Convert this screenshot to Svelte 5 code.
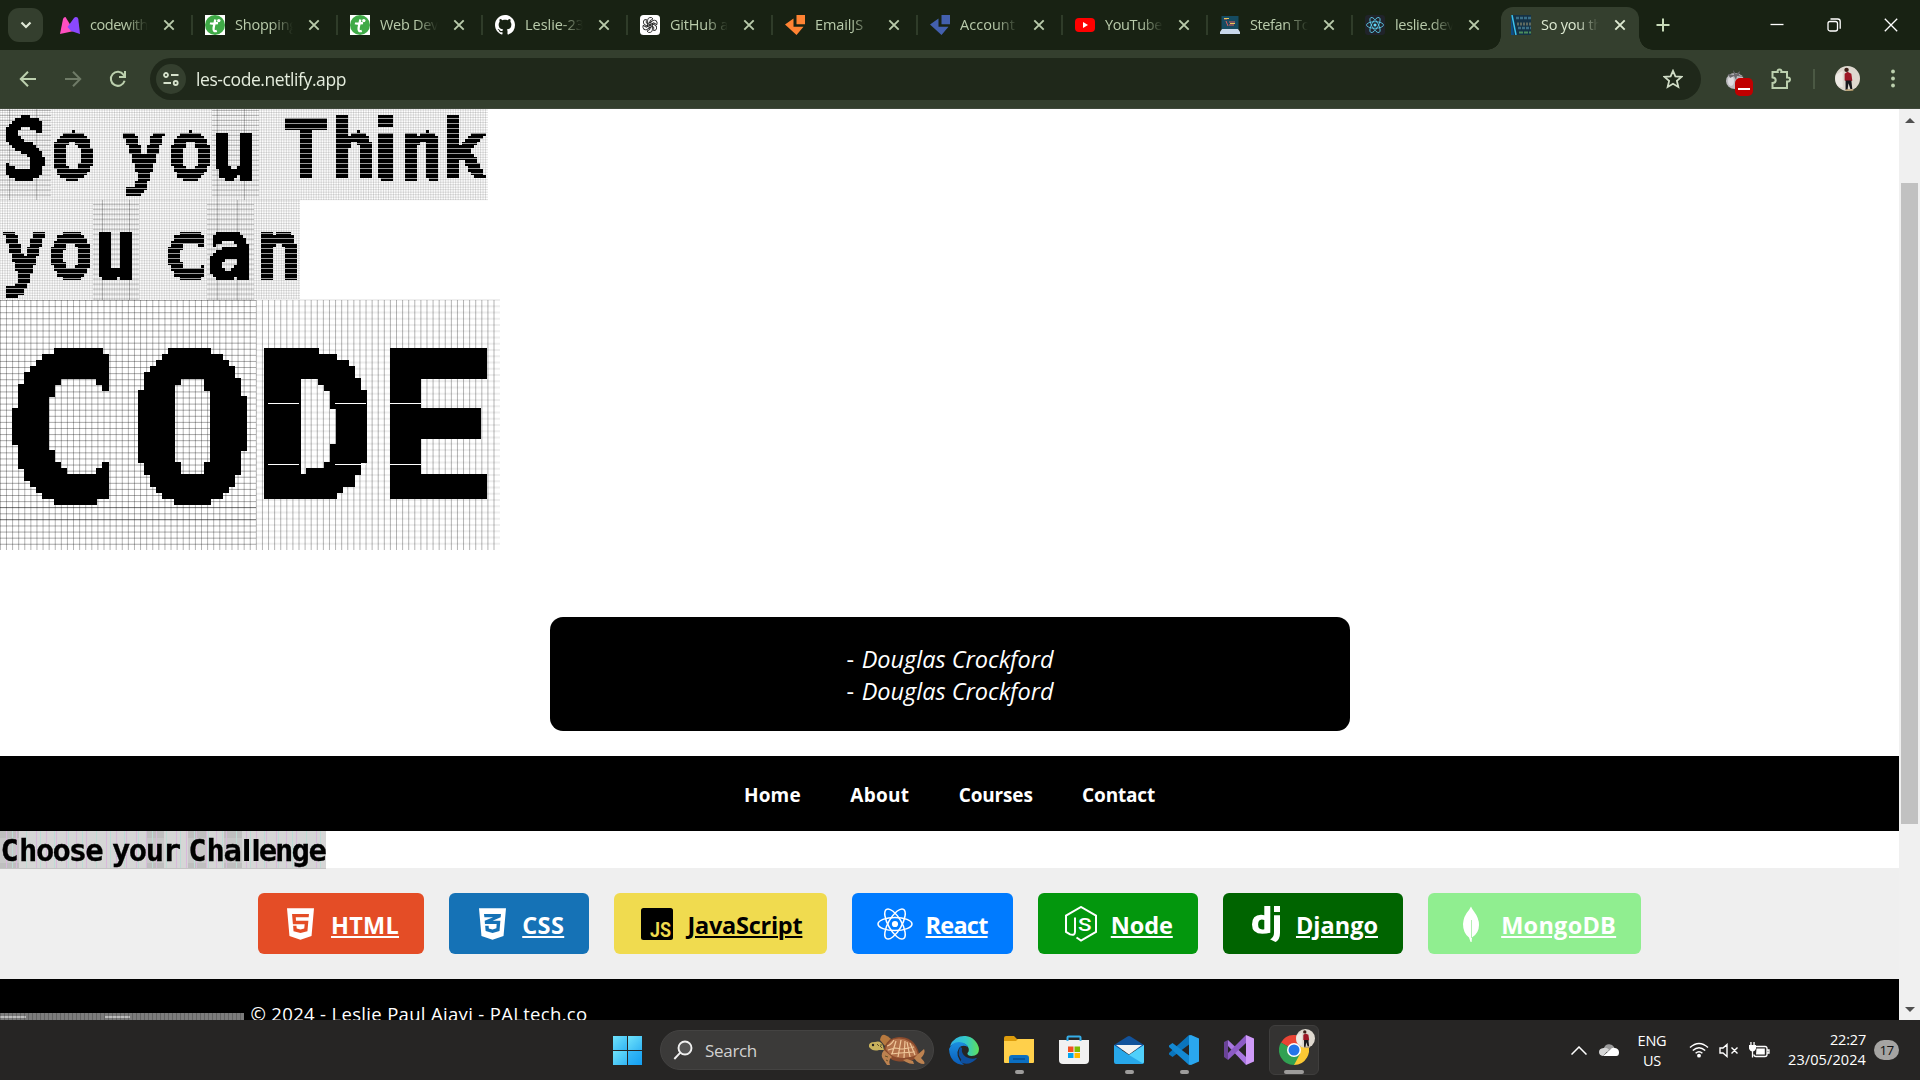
<script>
  // Adjusts letter spacing so that a label fills its measured width.
  function fit(node, width) {
    const n = node.textContent.trim().length;
    const apply = () => {
      node.style.letterSpacing = '0px';
      const natural = node.getBoundingClientRect().width;
      node.style.letterSpacing = (width - natural) / n + 'px';
    };
    apply();
    document.fonts?.ready.then(apply);
  }

  const tabs = [
    { icon: 'mimo', title: 'codewith', w: 58 },
    { icon: 'fcc', title: 'Shopping', w: 62 },
    { icon: 'fcc', title: 'Web Dev', w: 58 },
    { icon: 'github', title: 'Leslie-23', w: 59 },
    { icon: 'gpt', title: 'GitHub a', w: 58 },
    { icon: 'emailjs', title: 'EmailJS', w: 48 },
    { icon: 'account', title: 'Account', w: 55 },
    { icon: 'youtube', title: 'YouTube', w: 57 },
    { icon: 'laptop', title: 'Stefan To', w: 60 },
    { icon: 'react', title: 'leslie.dev', w: 59 }
  ];

  const links = [
    { text: 'Home', w: 57 },
    { text: 'About', w: 59 },
    { text: 'Courses', w: 74 },
    { text: 'Contact', w: 73 }
  ];

  const courses = [
    { id: 'html', text: 'HTML', w: 68 },
    { id: 'css', text: 'CSS', w: 42 },
    { id: 'js', text: 'JavaScript', w: 115 },
    { id: 'react', text: 'React', w: 62 },
    { id: 'node', text: 'Node', w: 62 },
    { id: 'django', text: 'Django', w: 82 },
    { id: 'mongo', text: 'MongoDB', w: 115 }
  ];

  // Evenly spaced hairlines used as the texture behind the display type.
  const vlines = (x0, x1, y0, y1, step, off = 0) => {
    let d = '';
    for (let x = Math.ceil((x0 - off) / step) * step + off; x < x1; x += step) d += `M${x.toFixed(2)} ${y0}V${y1}`;
    return d;
  };
  const hlines = (x0, x1, y0, y1, step, off = 0) => {
    let d = '';
    for (let y = y0 + off; y < y1; y += step) d += `M${x0} ${y.toFixed(2)}H${x1}`;
    return d;
  };
  const sc = (list, k) => list.map((v) => (v / k).toFixed(1)).join(' ');
  const line1 = sc([25.2, 73, 100, 144, 190.3, 234.3, 270, 306, 353.7, 386.7, 422, 465], 0.9);
  const line2 = sc([24.3, 71, 115, 150, 185.7, 229.7, 278.7], 0.9);
  const choose = '9.6 28.3 45.2 61.6 78 94.5 108 121.3 138 155 172 184 197.5 215.8 232.7 246.5 256 268 284.3 300.8 317.6';
</script>

{#snippet cross()}
  <svg class="cross" width="12" height="12" viewBox="0 0 12 12"><path d="M1.3 1.3l9.4 9.4M10.7 1.3l-9.4 9.4" /></svg>
{/snippet}

{#snippet atom(color, size)}
  <svg width={size} height={size} viewBox="0 0 36 36" fill="none" stroke={color} stroke-width="1.5">
    <ellipse cx="18" cy="18" rx="17" ry="6.6" />
    <ellipse cx="18" cy="18" rx="17" ry="6.6" transform="rotate(60 18 18)" />
    <ellipse cx="18" cy="18" rx="17" ry="6.6" transform="rotate(120 18 18)" />
    <circle cx="18" cy="18" r="3.1" fill={color} stroke="none" />
  </svg>
{/snippet}

{#snippet portrait(size)}
  <svg width={size} height={size} viewBox="0 0 26 26">
    <circle cx="13" cy="13" r="13" fill="#ded8cf" />
    <path d="M1 9a13 13 0 0 0 2 12l5 1V5z" fill="#eeeae4" />
    <path d="M10 8l3-2 4 2 1 7-3 2-5-2z" fill="#9c1725" />
    <circle cx="12" cy="4" r="2.3" fill="#3d2018" />
    <path d="M11 15h6l1 9h-2l-2-6-1 7h-2z" fill="#18171c" />
    <path d="M11 25h8" stroke="#b69b68" stroke-width="1.5" />
  </svg>
{/snippet}

{#snippet favicon(name)}
  {#if name === 'mimo'}
    <svg width="20" height="20" viewBox="0 0 20 20"><path d="M5.5 2L14 16 0 19 3 4q.6-2 2.500-2z" fill="#ff4fc0" /><path d="M16 2q2 0 2.300 2L20 19l-9-3-3.500-4L14 3q.8-1 2-1z" fill="#8a48ff" /></svg>
  {:else if name === 'fcc'}
    <svg width="20" height="20" viewBox="0 0 20 20"><path fill="#fff" d="M0 0h20v20H0z" /><circle cx="10" cy="10" r="10" fill="#3faa47" /><path d="M10.300 4.500L8.600 13q-.5 4.200 3.200 2.800M5 8.300q2 .8 5 0l3-.3" stroke="#fff" stroke-width="2.300" fill="none" /><circle cx="13.800" cy="5.600" r="1.700" fill="#fff" /></svg>
  {:else if name === 'github'}
    <svg width="20" height="20" viewBox="0 0 16 16"><path fill="#fff" d="M8 0C3.58 0 0 3.58 0 8c0 3.54 2.29 6.53 5.47 7.59.4.07.55-.17.55-.38 0-.19-.01-.82-.01-1.49-2.01.37-2.53-.49-2.69-.94-.09-.23-.48-.94-.82-1.13-.28-.15-.68-.52-.01-.53.63-.01 1.08.58 1.23.82.72 1.21 1.87.87 2.33.66.07-.52.28-.87.51-1.07-1.78-.2-3.64-.89-3.64-3.95 0-.87.31-1.59.82-2.15-.08-.2-.36-1.02.08-2.12 0 0 .67-.21 2.2.82.64-.18 1.32-.27 2-.27s1.36.09 2 .27c1.53-1.04 2.2-.82 2.2-.82.44 1.1.16 1.92.08 2.12.51.56.82 1.27.82 2.15 0 3.07-1.87 3.75-3.65 3.95.29.25.54.73.54 1.48 0 1.07-.01 1.93-.01 2.2 0 .21.15.46.55.38A8.01 8.01 0 0 0 16 8c0-4.42-3.58-8-8-8z" /></svg>
  {:else if name === 'gpt'}
    <svg width="20" height="20" viewBox="0 0 20 20"><rect width="20" height="20" rx="3.5" fill="#fff" /><g fill="none" stroke="#222" stroke-width=".9">{#each [0, 60, 120, 180, 240, 300] as a}<path d="M10 7.300L7.600 8.700V5.200a2.900 2.900 0 0 1 5.400-1.300l-3 1.800v4.200" transform="rotate({a} 10 10)" />{/each}</g></svg>
  {:else if name === 'emailjs' || name === 'account'}
    <svg width="20" height="20" viewBox="0 0 20 20" fill={name === 'emailjs' ? '#ff8333' : '#4360ae'}><path d="M11.500 0H20v9.200h-8.500zM8.500 3.500v8.200H18.500L11.500 20 0 9.500z" /></svg>
  {:else if name === 'youtube'}
    <svg width="20" height="20" viewBox="0 0 20 20"><rect y="3" width="20" height="14" rx="4" fill="#f00" /><path d="M8 7v6l5-3z" fill="#fff" /></svg>
  {:else if name === 'laptop'}
    <svg width="20" height="20" viewBox="0 0 20 20"><path d="M1.500 1h17v13h-17z" fill="#154b61" /><path d="M4 4h3M6 6l2 5M9 7h6M9 10h5" stroke="#e05c5c" /><path d="M4 3.500h5M10 8.500h5" stroke="#e8c65b" /><path d="M2 14h16l2 3v2H0v-2z" fill="#c8d8ea" /></svg>
  {:else if name === 'react'}
    <span class="atom-tile">{@render atom('#61dafb', 18)}</span>
  {:else}
    <svg width="20" height="20" viewBox="0 0 20 20"><path fill="#153246" d="M0 0h20v20H0z" /><path d="M0 0l3 20H0z" fill="#0d4e86" /><path d="M1 0l4 20" stroke="#3cc4ef" stroke-width="1.500" /><path d="M5 3h15M7 13h13" stroke="#3a6e85" stroke-width="2.500" stroke-dasharray="3 1" /><path d="M6 9h14" stroke="#5f6a60" stroke-width="3" stroke-dasharray="2 1" /><path d="M8 17.500h12" stroke="#4b8d5c" stroke-width="2" stroke-dasharray="4 1" /></svg>
  {/if}
{/snippet}

<div class="screen">
  <header class="tabstrip">
    <button class="tabsearch" aria-label="Search tabs"><svg width="12" height="8" viewBox="0 0 12 8"><path d="M1.500 1.500L6 6l4.500-4.500" /></svg></button>
    {#each tabs as tab, i}
      <div class="tab" class:last={i === 9}>
        <span class="fav">{@render favicon(tab.icon)}</span>
        <span class="title"><span use:fit={tab.w}>{tab.title}</span></span>
        {@render cross()}
      </div>
    {/each}
    <div class="tab active">
      <span class="fav">{@render favicon('page')}</span>
      <span class="title"><span use:fit={61}>So you th</span></span>
      {@render cross()}
    </div>
    <svg class="plus" width="14" height="14" viewBox="0 0 14 14"><path d="M7 .5v13M.5 7h13" /></svg>
    <div class="winctl">
      <svg width="14" height="14" viewBox="0 0 14 14"><path d="M.5 6.500h13" /></svg>
      <svg width="14" height="14" viewBox="0 0 14 14"><rect x="1" y="3.500" width="9.500" height="9.500" rx="2" /><path d="M3.500 1h7.200q2.500 0 2.500 2.500v7.200" /></svg>
      <svg width="14" height="14" viewBox="0 0 14 14"><path d="M.8.8l12.400 12.400M13.200.8L.8 13.200" /></svg>
    </div>
  </header>

  <div class="toolbar">
    <svg class="nav" width="18" height="18" viewBox="0 0 18 18"><path d="M17 9H2M9 1.800L1.800 9 9 16.200" /></svg>
    <svg class="nav dim" width="18" height="18" viewBox="0 0 18 18"><path d="M1 9h15M9 1.800L16.200 9 9 16.200" /></svg>
    <svg class="nav" width="18" height="18" viewBox="0 0 18 18"><path d="M15.600 10.800A7 7 0 1 1 14.600 4.800L16 6.600M16 1v6h-6" /></svg>
    <div class="omnibox">
      <span class="site"><svg width="16" height="14" viewBox="0 0 16 14"><circle cx="3" cy="3" r="2" /><path d="M8 3h7.500M.5 11H8" /><circle cx="12.700" cy="11" r="2" /></svg></span>
      <span class="url"><span use:fit={150}>les-code.netlify.app</span></span>
      <svg class="star" width="20" height="20" viewBox="0 0 20 20"><path d="M10 1.800l2.400 5.600 6.100.5-4.600 4 1.400 6L10 14.700l-5.300 3.200 1.400-6-4.600-4 6.100-.5z" /></svg>
    </div>
    <div class="ext">
      <svg width="22" height="20" viewBox="0 0 22 20"><ellipse cx="10" cy="12" rx="9" ry="8" fill="#bdbcc0" /><ellipse cx="6" cy="12" rx="3" ry="5" fill="#dddce0" /><path d="M3 5l6 1-1-5 3 4 4-3-1 4 5 2-7-1-1 4-2-4-4 2z" fill="#6a696d" /></svg>
      <i></i>
    </div>
    <svg class="puzzle" width="22" height="22" viewBox="0 0 22 22"><path d="M2.500 4h5.200q-.5-2.500 1.800-2.500T11.300 4H17v5.500q3-.3 3 2t-3 2V20H2.500v-5q3.200-.2 3.200-2.800T2.500 9.400z" /></svg>
    <span class="bar"></span>
    <span class="me">{@render portrait(25)}</span>
    <svg class="dots" width="6" height="20" viewBox="0 0 6 20"><circle cx="3" cy="2.500" r="1.900" /><circle cx="3" cy="9.500" r="1.900" /><circle cx="3" cy="16.500" r="1.900" /></svg>
  </div>

  <div class="viewport">
    <main class="page">
      <h1>
        <svg width="500" height="441" viewBox="0 109 500 441">
          <defs>
            <filter id="px6" x="0" y="300" width="500" height="250" filterUnits="userSpaceOnUse" primitiveUnits="userSpaceOnUse">
              <feComponentTransfer in="SourceGraphic" result="src"><feFuncA type="discrete" tableValues="0 1" /></feComponentTransfer>
              <feFlood x="3" y="303" width="1" height="1" result="f" />
              <feOffset in="f" dx="0" dy="0" x="0" y="300" width="6" height="6" result="cell" />
              <feTile in="cell" x="0" y="300" width="500" height="250" result="grid" />
              <feComposite in="src" in2="grid" operator="in" x="0" y="300" width="500" height="250" />
              <feMorphology operator="dilate" radius="3" x="0" y="300" width="500" height="250" />
            </filter>
            <filter id="px3" x="0" y="109" width="500" height="191" filterUnits="userSpaceOnUse" primitiveUnits="userSpaceOnUse">
              <feComponentTransfer in="SourceGraphic" result="src"><feFuncA type="discrete" tableValues="0 1" /></feComponentTransfer>
              <feFlood x="1" y="110" width="1" height="1" result="f" />
              <feOffset in="f" dx="0" dy="0" x="0" y="109" width="3" height="3" result="cell" />
              <feTile in="cell" x="0" y="109" width="500" height="191" result="grid" />
              <feComposite in="src" in2="grid" operator="in" x="0" y="109" width="500" height="191" />
              <feMorphology operator="dilate" radius="1" x="0" y="109" width="500" height="191" />
            </filter>
          </defs>
          <g class="fine">
            <path d={vlines(0, 488, 109, 200, 2.49)} />
            <path d={hlines(0, 488, 109, 200, 2.49, 1)} />
            <path d={vlines(0, 300, 200, 300, 2.49)} />
            <path d={hlines(0, 300, 200, 300, 2.49, 1)} />
          </g>
          <g class="dense">
            <path d={hlines(0, 51, 109, 200, 4.98, 1.500)} />
            <path d={hlines(212, 259, 109, 200, 4.98, 1.500)} />
            <path d={hlines(93, 139, 200, 300, 4.98, 4.500)} />
            <path d={hlines(207, 254, 200, 300, 4.98, 4.500)} />
            <path d="M9.500 109v91M36.500 109v91M217.500 109v91M244.500 109v91M102.500 200v100M129.500 200v100M217.500 200v100M237.500 200v100" />
          </g>
          <g class="coarse">
            <path class="soft" d={hlines(256, 500, 300, 550, 6.25, 0)} />
            <path d={vlines(0, 500, 300, 550, 6.094, 0.400)} />
            <path class="strong" d={hlines(0, 256, 300, 550, 6.094, 0.500)} />
            <path class="strong" d="M0 507.500h256M0 519.500h256" />
          </g>
          <g class="display" filter="url(#px3)">
            <g transform="scale(.9 1)">
              <text x={line1} y="179.500">So you Th<tspan class="plain">i</tspan>nk</text>
              <text x={line2} y="279.500">you can</text>
            </g>
          </g>
          <text class="display big" filter="url(#px6)" x="62.500 192 314.500 436" y="499.500">CODE</text>
          <g class="scan">
            <path d={hlines(51, 212, 109, 200, 5, 4.500)} />
            <path d={hlines(259, 488, 109, 200, 5, 4.500)} />
            <path d={hlines(0, 93, 200, 300, 5, 3.500)} />
            <path d={hlines(139, 207, 200, 300, 5, 3.500)} />
            <path d={hlines(254, 300, 200, 300, 5, 3.500)} />
            <path class="gap" d="M268 403.500h31M335 403.500h31M390 403.500h31M268 464.500h31M335 464.500h31M390 464.500h31" />
          </g>
        </svg>
      </h1>

      <section class="quote">
        <p use:fit={207}>- <em>Douglas Crockford</em></p>
        <p use:fit={207}>- <em>Douglas Crockford</em></p>
      </section>

      <nav class="menu">
        {#each links as link}<a href="#top"><span use:fit={link.w}>{link.text}</span></a>{/each}
      </nav>

      <h2>
        <svg width="326" height="38" viewBox="0 0 326 38">
          <path fill="#d6d6d6" d="M0 0h326v38H0z" />
          <path fill="#bfbfbf" d="M0 0h19v7H0zM146 0h18v7h-18zM188 0h19v7h-19zM224 0h18v7h-18zM0 32h19v6H0zM146 32h18v6h-18zM188 32h19v6h-19zM224 32h18v6h-18z" />
          <path fill="#c8c8c8" d="M0 7h19v25H0zM146 7h18v25h-18zM188 7h19v25h-19zM224 7h18v25h-18z" />
          <path d={vlines(0, 326, 0, 38, 10, 6.500)} stroke="#d9b8dc" />
          <path d={vlines(0, 326, 0, 38, 14, 12.500)} stroke="#bedbd5" />
          <path d="M0 37.500h326" stroke="#c4c4c4" />
          <text class="display small" x={choose} y="30">Choose your Cha<tspan class="plain">ll</tspan>enge</text>
        </svg>
      </h2>

      <section class="courses">
        {#each courses as course}
          <a class="course {course.id}" href="#top">
            {#if course.id === 'html'}
              <svg width="27" height="36" viewBox="0 0 384 512"><path d="M0 32l34.900 395.800L191.500 480l157.600-52.200L384 32H0zm308.200 127.900H124.400l4.100 49.400h175.600l-13.600 148.400-97.900 27v.3h-1.100l-98.700-27.300-6-75.800h47.700L138 320l53.500 14.500 53.700-14.500 6-62.200H84.300L71.500 112.200h241.100l-4.400 47.700z" /></svg>
            {:else if course.id === 'css'}
              <svg width="27" height="36" viewBox="0 0 384 512"><path d="M0 32l34.900 395.800L192 480l157.100-52.200L384 32H0zm313.100 80l-4.800 47.300L193 208.600l-.3.1h111.500l-12.800 146.600-98.200 28.700-98.800-29.200-6.400-73.900h48.900l3.200 38.300 52.600 13.300 54.700-15.400 3.700-61.600-166.300-.5v-.1l-.2.1-3.600-46.300L193.100 162l6.500-2.700H76.700L70.900 112h242.200z" /></svg>
            {:else if course.id === 'js'}
              <svg width="32" height="36" viewBox="0 0 32 36"><rect y="2" width="32" height="32" rx="2.500" /><text x="9" y="31" textLength="21" lengthAdjust="spacingAndGlyphs">JS</text></svg>
            {:else if course.id === 'react'}
              {@render atom('#fff', 36)}
            {:else if course.id === 'node'}
              <svg width="32" height="36" viewBox="0 0 32 36"><path class="line" d="M11.500 31.500l1.500 1 3 2 15-8.600V9.600L16 1 1 9.600v16.300l4 2.500q5 1.600 5-2.600V11.500" /><text x="13" y="25" textLength="13.500" lengthAdjust="spacingAndGlyphs">S</text></svg>
            {:else if course.id === 'django'}
              <svg width="28" height="36" viewBox="0 0 28 36"><path d="M12.300 0h6v26.800q-4 1-8 1Q0 27.800 0 18.500 0 9 9 8.800q2 0 3.300.5zm0 14q-1.200-.5-2.500-.5-3.700.2-3.700 5 0 4.900 4.200 4.900 1 0 2-.2zM22 0h6v6h-6zM22 9.300h6v17.500q0 7-4.500 9.200L18 33.300q4-1.800 4-6.500z" /></svg>
            {:else}
              <svg width="18" height="36" viewBox="0 0 18 36"><path d="M9 .5q1 2.500 3 5Q17 12 17 19q0 8-7 12.500l-.4 4.500h-1L7 31.500Q1 27 1 18 1.500 10 7 4z" /><path d="M9.500 14v18" stroke="#b5efb5" /></svg>
            {/if}
            <span class="label"><span use:fit={course.w}>{course.text}</span></span>
          </a>
        {/each}
      </section>

      <footer>
        <span class="strip"></span>
        <span class="copy"><span use:fit={337}>© 2024 - Leslie Paul Ajayi - PALtech.co</span></span>
      </footer>
    </main>
    <div class="scrollbar"><b class="up"></b><span class="thumb"></span><b class="down"></b></div>
  </div>

  <div class="taskbar">
    <div class="start"><i></i><i></i><i></i><i></i></div>
    <div class="search">
      <svg width="20" height="20" viewBox="0 0 20 20"><circle cx="12" cy="8" r="6.500" /><path d="M7.300 12.700L1.300 19" /></svg>
      <span class="word"><span use:fit={52}>Search</span></span>
      <svg class="turtle" width="58" height="32" viewBox="0 0 58 32">
        <path d="M13 6q1-6 5-5 3 1 6 4l-6 7z" fill="#b7793f" />
        <path d="M17 16Q19 4 32 3q14 0 19 13l2 7q-12 6-24 4-9-2-12-11z" fill="#8a4a2c" />
        <path d="M19 15Q21 5 32 4.500 44 5 49 15l2 6q-11 4-21 2.500-8-2-11-8.500z" fill="#b3714a" />
        <path d="M20 12q4-1 7-6M25 20l4-13M31 23l3-17M37 24l1-17M43 23L40 8M48 21l-5-12M21 16l7-2 8 1 11-2M24 20l9-1 15-1" stroke="#efc79a" stroke-width="1.200" fill="none" />
        <path d="M16 12Q14 6 8 8q-7 0-6 5 4 5 10 3h5z" fill="#c9b25c" />
        <path d="M17 16q-4 5-1 9l4 6h3q-2-6 2-8zM49 22l8-7q2 4-3 9 5 5 3 6-6 0-10-6zM36 26l3 2q3 2 8 2l-1-3-6-2z" fill="#bd8250" />
        <circle cx="6" cy="11" r="1.200" fill="#222" /><path d="M10 10l2 2M13 12l2 2M18 22l3 1M19 26l2 1M14 10v2" stroke="#645027" />
      </svg>
    </div>
    <div class="apps">
      <span class="app"><svg width="30" height="30" viewBox="0 0 30 30"><defs><linearGradient id="eg" x2="1"><stop stop-color="#2fb0e8" /><stop offset=".55" stop-color="#33c8c8" /><stop offset="1" stop-color="#5fe05a" /></linearGradient><linearGradient id="eb" x2="0" y2="1"><stop stop-color="#1b8fe0" /><stop offset="1" stop-color="#0a5cb8" /></linearGradient></defs><path d="M1 11A15 15 0 0 1 30 14q0 7-7.500 7-4.500-.3-4-3 2-2 1-5-2-5-8-5T1 11z" fill="url(#eg)" /><path d="M0 14q3-7 10-7 7 .3 9 5-6-3-9 1-5 8 5 17Q1 29 0 14z" fill="url(#eb)" /><path d="M11 12q-4 9 3 14 7 4 14-3-6 2-11-1-5-3-4-9z" fill="#0e4f9e" /><path d="M11 27q9 5 17-4-8 4-15 0z" fill="#0e4f9e" /></svg></span>
      <span class="app run"><svg width="30" height="28" viewBox="0 0 30 28"><path d="M0 2q0-2 2-2h8l3 3h15q2 0 2 2v6H0z" fill="#dd9c0c" /><path d="M0 5h12l2-2h16v23q0 1-1 1H1q-1 0-1-1z" fill="#ffd04b" /><path d="M5 27v-5q0-3 3-3h14q3 0 3 3v5z" fill="#0b6fc2" /><path d="M9 23h12" stroke="#064d91" stroke-width="1.500" /></svg></span>
      <span class="app"><svg width="30" height="30" viewBox="0 0 30 30"><path d="M0 5h30v20q0 4-4 4H4q-4 0-4-4z" fill="#f1f1f1" /><path d="M8.500 6V2.500q0-1 1-1h11q1 0 1 1V6" fill="none" stroke="#35aee8" stroke-width="2" /><path fill="#f25022" d="M9 11.500h5.500V17H9z" /><path fill="#7fba00" d="M15.500 11.500H21V17h-5.500z" /><path fill="#00a4ef" d="M9 18h5.500v5H9z" /><path fill="#ffb900" d="M15.500 18H21v5h-5.500z" /></svg></span>
      <span class="app run"><svg width="30" height="30" viewBox="0 0 30 30"><path d="M0 10L13.500 1.500q1.500-1 3 0L30 10v5H0z" fill="#12539b" /><path d="M0 10l15 10 15-10v17q0 2-2 2H2q-2 0-2-2z" fill="#28a8ea" /><path d="M15 20l15-10v17l-1 1.500z" fill="#50d0fb" /><path d="M2 10h26L15 19.500z" fill="#f3f3f3" /></svg></span>
      <span class="app run"><svg width="30" height="30" viewBox="0 0 30 30"><path d="M22 8L3.500 22 0 19.500V18L20 0l2 1z" fill="#0a75bd" /><path d="M22 22L3.500 8 0 10.500V12l20 18 2-1z" fill="#1389d3" /><path d="M22 0l8 3.500v23L22 30l-2-.5V.5z" fill="#2aa7ef" /></svg></span>
      <span class="app"><svg width="30" height="30" viewBox="0 0 30 30"><path d="M0 7l4-2v20l-4-3z" fill="#6a4398" /><path d="M4 5l18 17v8L4 11z" fill="#a877e0" /><path d="M4 25L22 8V0L4 18z" fill="#8c5bc5" /><path d="M22 0l8 3.500v23L22 30z" fill="#cf9af8" /></svg></span>
      <span class="app run current">
        <svg width="30" height="30" viewBox="0 0 30 30"><path d="M15 15L2 7.500A15 15 0 0 1 28 7.500z" fill="#e94435" /><path d="M15 15L28 7.500A15 15 0 0 1 15 30z" fill="#fcc934" /><path d="M15 15l6 4-6 11A15 15 0 0 1 2 7.500z" fill="#31a152" /><circle cx="15" cy="15" r="7" fill="#fff" /><circle cx="15" cy="15" r="5.500" fill="#2374e8" /></svg>
        <span class="mini">{@render portrait(19)}</span>
      </span>
    </div>
    <div class="tray">
      <svg class="chev" width="16" height="9" viewBox="0 0 16 9"><path d="M.5 8.500L8 1l7.500 7.500" /></svg>
      <svg class="cloud" width="20" height="14" viewBox="0 0 20 14"><path d="M5 5a5.500 5.500 0 0 1 10-1l1 5H2z" fill="#9b9b9b" /><path d="M4.500 5q3-1 5.500 1.500L4 13Q0 12.500 0 9t4.500-4z" fill="#d5d5d5" /><path d="M4 13l7-6q2-3 5-2 4 .5 4 4.500T16.500 13z" fill="#fff" /></svg>
      <div class="lang"><span use:fit={29}>ENG</span><span use:fit={18}>US</span></div>
      <svg class="wifi" width="20" height="16" viewBox="0 0 20 16"><path d="M1 5.500q9-8 18 0M3.800 8.500q6.200-5.500 12.400 0M6.600 11.300q3.400-3 6.800 0" /><circle cx="10" cy="13.700" r="1.900" /></svg>
      <svg class="vol" width="20" height="15" viewBox="0 0 20 15"><path d="M1 5v5h3l4 3.500v-12L4 5zM12.500 4.500l6 6M18.500 4.500l-6 6" /></svg>
      <svg class="bat" width="21" height="17" viewBox="0 0 21 17"><path d="M7 4.500h9q2 0 2 2v6q0 2-2 2H7q-2 0-2-2M18.500 8h1.500v3h-1.500M3.500 9v6.500" fill="none" stroke="#fff" stroke-width="1.300" /><path d="M7.500 6.500h8.300v6H7zM0 3h7v3.500q-1 3-3.500 3T0 6.500zM1.300 0h1.300v3H1.300zM4.400 0h1.300v3H4.400z" fill="#fff" /></svg>
      <div class="clock"><span use:fit={36}>22:27</span><span use:fit={78}>23/05/2024</span></div>
      <span class="count"><span use:fit={14}>17</span></span>
    </div>
  </div>
</div>

<style>
  :global(body) { margin: 0; overflow: hidden; background: #fff; }
  * { box-sizing: border-box; }
  svg { display: block; flex: none; }
  .screen { width: 1920px; height: 1080px; overflow: hidden; display: flex; flex-direction: column; font-family: "Open Sans", "Noto Sans", sans-serif; }

  .tabstrip { height: 50px; flex: none; background: #182213; display: flex; align-items: center; padding-left: 8px; color: #b9cbab; }
  .tabsearch { width: 35px; height: 34px; margin: 0 5px 0 0; padding: 0; border: 0; border-radius: 11px; background: #343f2e; display: grid; place-items: center; flex: none; }
  .tabsearch path { fill: none; stroke: #dfe8d6; stroke-width: 2.200; }
  .tab { width: 145px; height: 20px; flex: none; display: flex; align-items: center; padding-left: 12px; border-right: 2px solid #2f3c29; }
  .tab.last { border-color: transparent; }
  .fav { width: 20px; height: 20px; flex: none; margin-right: 10px; }
  .atom-tile { width: 20px; height: 20px; display: grid; place-items: center; background: #20232a; border-radius: 3px; }
  .title { width: 58px; overflow: hidden; white-space: nowrap; font-size: 14.500px; line-height: 22px; mask-image: linear-gradient(90deg, #000 62%, transparent); margin-right: 15px; }
  .title span { display: inline-block; }
  .cross path { fill: none; stroke: #b9cbab; stroke-width: 1.900; }
  .tab.active { position: relative; align-self: flex-end; height: 43px; width: 138px; margin-left: 3px; padding-left: 10px; padding-bottom: 7px; border: 0; border-radius: 12px 12px 0 0; background: #343f2e; color: #dde9d1; }
  .tab.active .cross path { stroke: #dde9d1; }
  .tab.active::before, .tab.active::after { content: ""; position: absolute; bottom: 0; width: 14px; height: 14px; }
  .tab.active::before { left: -14px; background: radial-gradient(circle at 0 0, transparent 13.500px, #343f2e 14px); }
  .tab.active::after { right: -14px; background: radial-gradient(circle at 100% 0, transparent 13.500px, #343f2e 14px); }
  .plus { margin-left: 17px; }
  .plus path { stroke: #c8dbb9; stroke-width: 2; }
  .winctl { margin-left: auto; display: flex; gap: 43px; padding-right: 22px; }
  .winctl svg { fill: none; stroke: #fff; stroke-width: 1.300; }

  .toolbar { height: 59px; flex: none; background: #343f2e; display: flex; align-items: center; padding: 0 24px 1px 19px; border-bottom: 1px solid #40493b; }
  .nav { margin-right: 27px; fill: none; stroke: #bcd0ae; stroke-width: 2; }
  .nav.dim { stroke: #6f7b67; }
  .nav:nth-child(3) { margin-right: 23px; }
  .omnibox { width: 1551px; height: 42px; border-radius: 21px; background: #1f281a; display: flex; align-items: center; padding: 0 18px 0 6px; }
  .site { width: 30px; height: 30px; border-radius: 50%; background: #343f2e; display: grid; place-items: center; margin-right: 10px; }
  .site svg { fill: none; stroke: #d5e1cb; stroke-width: 1.800; }
  .url { flex: 1; color: #e4ecdd; font-size: 17.500px; line-height: 24px; white-space: nowrap; padding-top: 1px; }
  .url span { display: inline-block; }
  .star path { fill: none; stroke: #d0dcc6; stroke-width: 1.800; }
  .ext { position: relative; margin-left: 24px; width: 28px; height: 20px; }
  .ext i { position: absolute; left: 10px; top: 9px; width: 18px; height: 18px; border-radius: 5px; background: #c00000; }
  .ext i::after { content: ""; position: absolute; left: 3px; top: 10px; width: 12px; height: 2px; background: #fff; }
  .puzzle { margin-left: 17px; fill: none; stroke: #bcd0ae; stroke-width: 2; }
  .bar { width: 2px; height: 20px; background: #4b5944; margin-left: 21px; }
  .me { margin-left: 20px; }
  .dots { margin-left: auto; fill: #bcd0ae; }

  .viewport { height: 911px; flex: none; display: flex; overflow: hidden; }
  .page { width: 1899px; background: #fff; overflow: hidden; display: flex; flex-direction: column; }
  h1, h2, p { margin: 0; font-weight: 400; }
  h1 { height: 441px; flex: none; }
  .display { font-family: "DejaVu Sans Mono", monospace; font-weight: 700; font-size: 83.500px; text-anchor: middle; fill: #000; stroke: #000; stroke-width: 1.500; }
  .plain { font-family: "DejaVu Sans", sans-serif; }
  .big { font-size: 204px; stroke-width: 3; }
  .small { font-size: 30.500px; stroke-width: .3; }
  .small .plain { font-size: 28px; stroke: none; }
  .fine path { stroke: #000; stroke-width: .13; }
  .dense path { stroke: #000; stroke-width: .22; }
  .coarse path { stroke: #000; stroke-width: .3; }
  .coarse .strong { stroke-width: .34; }
  .coarse .soft { stroke: #eee; stroke-width: 2; }
  .scan path { stroke: #999; stroke-width: 1; mix-blend-mode: lighten; }
  .scan .gap { stroke: #fff; }
  .quote { width: 800px; height: 114px; flex: none; margin: 67px 0 25px 550px; border-radius: 13px; background: #000; color: #fff; display: flex; flex-direction: column; align-items: center; padding-top: 26px; font-size: 23.500px; line-height: 32px; }
  .quote p { white-space: nowrap; }
  .quote em { margin-left: 1.500px; }
  .menu { height: 75px; flex: none; background: #000; display: flex; justify-content: center; align-items: center; gap: 49.400px; padding-top: 3px; }
  .menu a { color: #fff; text-decoration: none; font-size: 19px; font-weight: 700; }
  .menu span { display: inline-block; }
  h2 { height: 37px; flex: none; }
  h2 svg { position: relative; }
  .courses { height: 111px; flex: none; background: #efefef; display: flex; justify-content: center; align-items: flex-start; gap: 25px; padding-top: 25px; }
  .course { height: 61px; flex: none; border-radius: 6px; display: grid; grid-template-columns: 36px auto; align-items: center; justify-items: center; column-gap: 12.200px; padding: 0 25px; color: #fff; fill: #fff; font-size: 23.500px; font-weight: 700; text-decoration: none; }
  .label { line-height: 30px; padding-top: 2px; }
  .label span { display: inline-block; text-decoration: underline; text-decoration-thickness: 2px; text-underline-offset: 2px; }
  .html { background: #e44d26; }
  .css { background: #1572b6; }
  .js { background: #f0db4f; color: #000; fill: #000; }
  .js svg text { fill: #f0db4f; font: 700 21px Roboto, sans-serif; }
  .course.react { background: #007bff; }
  .node { background: #03970d; }
  .node .line { fill: none; stroke: #fff; stroke-width: 2; }
  .node svg text { font: 500 19px Roboto, sans-serif; }
  .django { background: #006400; }
  .mongo { background: #90ee90; }
  footer { height: 41px; flex: none; background: #000; color: #fff; display: flex; align-items: flex-start; overflow: hidden; padding-top: 21px; }
  .strip { width: 244px; height: 7px; margin: 13px 6.500px 0 0; background: repeating-linear-gradient(90deg, #0003 0 1px, transparent 1px 4px), linear-gradient(90deg, #bbb 26px, transparent 26px 105px, #bbb 105px 130px, transparent 130px) 0 3px / 100% 2px no-repeat, #7c7c7c; }
  .copy { font-size: 18.500px; line-height: 27px; white-space: nowrap; }
  .copy span { display: inline-block; }
  .scrollbar { width: 21px; background: #f0f0f0; display: flex; flex-direction: column; align-items: center; padding: 9px 0 8px; }
  .scrollbar b { width: 0; height: 0; border: 5px solid transparent; }
  .up { border-top: 0 !important; border-bottom-color: #505050 !important; }
  .down { border-bottom: 0 !important; border-top-color: #505050 !important; margin-top: auto; }
  .thumb { width: 17px; height: 641px; margin-top: 60px; background: #c1c1c1; }

  .taskbar { height: 60px; flex: none; background: #262524; display: flex; align-items: center; color: #fff; }
  .start { width: 29px; height: 29px; margin: 0 18px 0 613px; display: grid; grid-template-columns: 14px 14px; grid-template-rows: 14px 14px; gap: 1px; }
  .start i { background: linear-gradient(135deg, #6fe3fb, #33b5f4); }
  .start i:last-child { background: linear-gradient(135deg, #3abaf7, #139ff2); }
  .search { width: 274px; height: 40px; border-radius: 20px; background: #3b3a39; border: 1px solid #444342; display: flex; align-items: center; padding: 0 8px 0 12px; font-size: 17px; color: #d2d1d0; }
  .search > svg:first-child { fill: #555; stroke: #f0f0f0; stroke-width: 1.900; margin-right: 12px; }
  .word { flex: 1; }
  .word span { display: inline-block; }
  .apps { display: flex; margin-left: 2.500px; }
  .app { position: relative; width: 55px; height: 50px; display: grid; place-items: center; }
  .app.run::after { content: ""; position: absolute; left: 23px; bottom: 1px; width: 9px; height: 4px; border-radius: 2px; background: #9d9c9b; }
  .app.current { width: 50px; margin-left: 2.500px; border-radius: 6px; background: #343332; border: 1px solid #3f3e3d; }
  .app.current::after { left: 14px; width: 20px; bottom: 0; }
  .mini { position: absolute; right: 3px; top: 3px; }
  .tray { margin-left: auto; display: flex; align-items: center; padding-right: 21px; font-size: 14.500px; line-height: 20px; }
  .lang, .clock { display: flex; flex-direction: column; align-items: center; padding-top: 1px; }
  .clock { align-items: flex-end; padding: 0; }
  .chev { fill: none; stroke: #fff; stroke-width: 1.500; margin-right: 12px; }
  .cloud { margin-right: 18px; }
  .lang { width: 30px; margin-right: 22px; }
  .wifi { fill: none; stroke: #fff; stroke-width: 1.500; margin-right: 10px; }
  .wifi circle { fill: #fff; stroke: none; }
  .vol { fill: none; stroke: #fff; stroke-width: 1.400; margin-right: 10px; }
  .bat { margin-right: 18px; }
  .clock { width: 78px; margin-right: 8px; }
  .count { width: 25px; height: 20px; border-radius: 10px; background: #a5a4a2; color: #111; display: grid; place-items: center; font-size: 13.500px; }
</style>
